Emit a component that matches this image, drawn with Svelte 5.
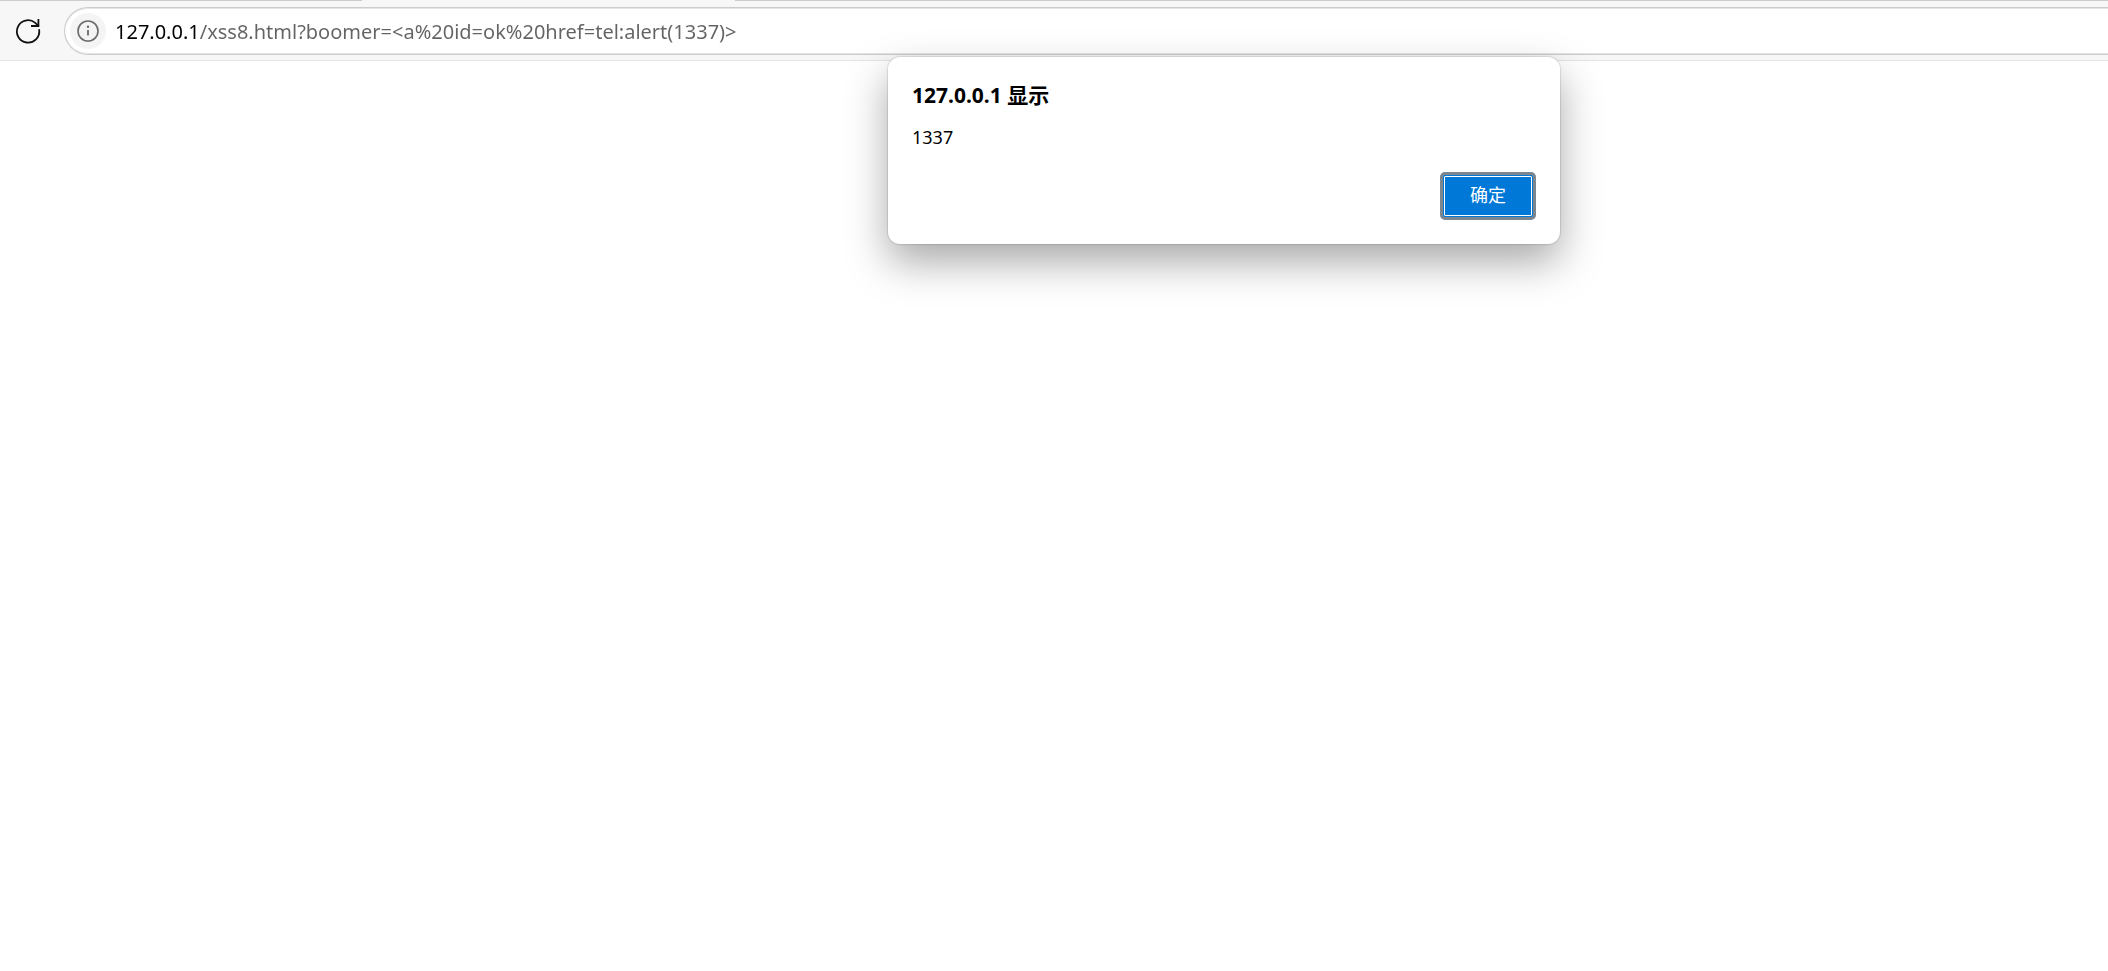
<script>
  let url = $state('127.0.0.1/xss8.html?boomer=<a%20id=ok%20href=tel:alert(1337)>');
  let open = $state(true);
</script>

<div class="browser">
  <header>
    <div class="tab-edge"><i class="before"></i><i class="active"></i><i class="after"></i></div>
    <div class="toolbar">
      <button class="reload" aria-label="Reload">
        <svg viewBox="0 0 28 28" width="28" height="28" fill="none" stroke="#111" stroke-width="1.8">
          <path d="M25.2 13A11.2 11.2 0 1 1 21 5.6L24.4 8.8" stroke-linecap="round" />
          <path d="M24.4 2V9H17" />
        </svg>
      </button>
      <div class="address">
        <button class="info" aria-label="Site information">
          <svg viewBox="0 0 22 22" width="22" height="22" fill="none" stroke="#6b6b6b">
            <circle cx="11" cy="11" r="10" stroke-width="1.6" />
            <path d="M11 10V15.4" stroke-width="1.8" />
            <circle cx="11" cy="6.8" r="1.2" fill="#6b6b6b" stroke="none" />
          </svg>
        </button>
        <input type="text" aria-label="Address" spellcheck="false" bind:value={url} />
      </div>
    </div>
  </header>

  {#if open}
    <div class="dialog" role="alertdialog" aria-labelledby="title" aria-describedby="message">
      <h1 id="title">127.0.0.1 显示</h1>
      <p id="message">1337</p>
      <div class="actions">
        <button class="ok" onclick={() => (open = false)}>确定</button>
      </div>
    </div>
  {/if}
</div>

<style>
  :global(body) {
    margin: 0;
    background: #fff;
  }
  .browser {
    position: relative;
    min-height: 100vh;
    font-family: "Noto Sans", "Noto Sans CJK SC", sans-serif;
    color: #000;
  }
  header {
    background: #f7f7f7;
    border-bottom: 1px solid #e5e5e5;
  }
  .tab-edge {
    display: flex;
    height: 1px;
  }
  .before {
    width: 362px;
    background: #ccc;
  }
  .active {
    width: 373px;
  }
  .after {
    flex: 1;
    background: #ccc;
  }
  .toolbar {
    display: flex;
    align-items: center;
    padding: 6px 0 5px 14px;
  }
  button {
    padding: 0;
    border: 0;
    font: inherit;
  }
  .reload {
    display: flex;
    width: 28px;
    height: 28px;
    margin-right: 22px;
    background: none;
  }
  .address {
    box-sizing: border-box;
    flex: 1;
    display: flex;
    align-items: center;
    height: 48px;
    padding-left: 5px;
    border: 1px solid #ccc;
    border-right: 0;
    border-radius: 24px 0 0 24px;
    background: #fff;
    box-shadow: inset 0 1px #e5e5e5, inset 0 -1px #e5e5e5;
  }
  .info {
    display: flex;
    align-items: center;
    justify-content: center;
    width: 36px;
    height: 36px;
    margin-right: 9px;
    border-radius: 50%;
    background: #f4f4f4;
  }
  input {
    flex: 1;
    min-width: 0;
    height: 32px;
    padding: 0;
    border: 0;
    outline: 0;
    font: inherit;
    font-size: 20px;
    color: transparent;
    caret-color: #000;
    background: linear-gradient(to right, #000 85px, #636363 85px);
    background-clip: text;
  }
  .dialog {
    position: absolute;
    top: 57px;
    left: calc(50% + 170px);
    transform: translateX(-50%);
    box-sizing: border-box;
    width: 672px;
    padding: 24px;
    border-radius: 12px;
    background: #fff;
    box-shadow: 0 0 0 1px rgba(0, 0, 0, 0.06), 0 0 3px rgba(0, 0, 0, 0.1), 0 18px 42px rgba(0, 0, 0, 0.34);
  }
  h1 {
    margin: 0 0 14px;
    font-size: 21px;
    line-height: 28px;
    font-weight: 700;
  }
  p {
    margin: 0;
    font-size: 18px;
    line-height: 28px;
  }
  .actions {
    display: flex;
    justify-content: flex-end;
    margin-top: 21px;
  }
  .ok {
    width: 96px;
    height: 48px;
    padding-bottom: 2px;
    border: 3px solid #7c868f;
    border-radius: 5px;
    background: #0078d7;
    color: #fff;
    font-size: 18px;
    line-height: 24px;
    outline: 1px solid #fff;
    outline-offset: -5px;
  }
</style>
